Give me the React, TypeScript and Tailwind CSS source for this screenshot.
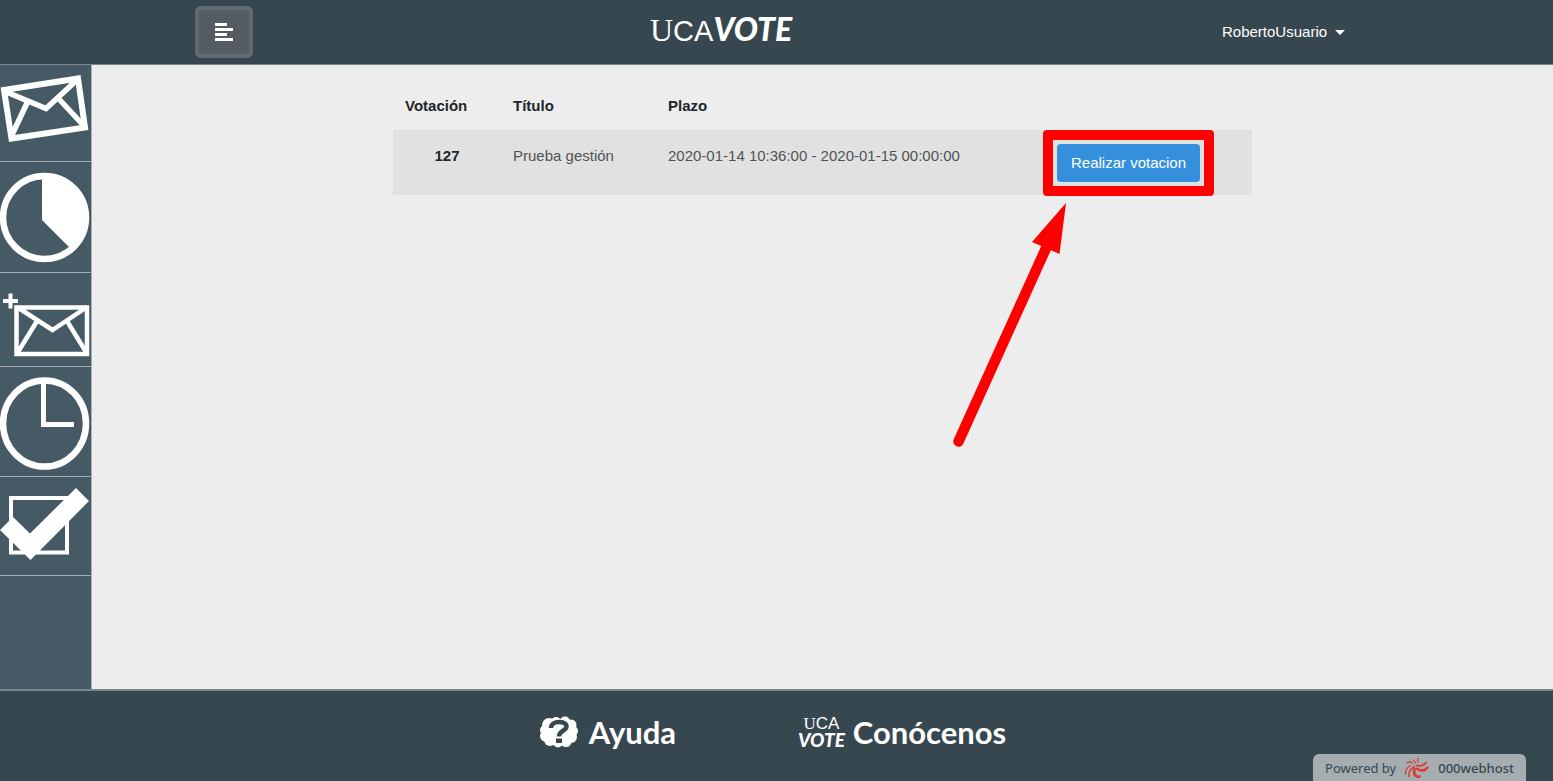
import React from "react";

function MailTilted() {
  return (
    <svg viewBox="0 0 91 96" className="block h-[96px] w-full" fill="none" stroke="#fff" strokeWidth="6">
      <path d="M4 25 78 13.500 85 62.500 11.500 73.500Z" />
      <path d="M4 26 46 43.500 78 14M28 36 11 72M58 33 85 62" strokeWidth="5.500" />
    </svg>
  );
}

function PieIcon() {
  return (
    <svg viewBox="0 0 91 110" className="block h-[110px] w-full">
      <circle cx="44.500" cy="55.500" r="41.500" fill="none" stroke="#fff" strokeWidth="6.500" />
      <path d="M42 12V58L68.500 84.500L76 86A44 44 0 0 0 42 12Z" fill="#fff" />
    </svg>
  );
}

function MailPlus() {
  return (
    <svg viewBox="0 0 91 93" className="block h-[93px] w-full" fill="none" stroke="#fff">
      <path d="M3 28H18M10.500 20.500V35.500" strokeWidth="4" />
      <path d="M16.500 34.500H87V81H16.500Z" strokeWidth="4.500" />
      <path d="M17 34 52.500 57 87 34M37 48 18 79M67 48 86 79" strokeWidth="4.500" />
    </svg>
  );
}

function ClockIcon() {
  return (
    <svg viewBox="0 0 91 109" className="block h-[109px] w-full" fill="none" stroke="#fff">
      <ellipse cx="44.500" cy="56.500" rx="41.500" ry="43" strokeWidth="6.500" />
      <path d="M43.500 14V57.500H74" strokeWidth="5" />
    </svg>
  );
}

function CheckIcon() {
  return (
    <svg viewBox="0 0 91 98" className="block h-[98px] w-full">
      <path d="M11 21H67V75.500H11Z" fill="none" stroke="#fff" strokeWidth="4" />
      <path d="M0 53 13 40 30 56.500 76 11 89 24 30.500 83Z" fill="#fff" />
    </svg>
  );
}

const links = [
  { label: "Votaciones", icon: <MailTilted /> },
  { label: "Resultados", icon: <PieIcon /> },
  { label: "Nueva votación", icon: <MailPlus /> },
  { label: "Pendientes", icon: <ClockIcon /> },
  { label: "Realizadas", icon: <CheckIcon /> },
];

function HelpIcon() {
  return (
    <svg viewBox="0 0 40 32" className="h-[32px] w-[40px]">
      <g fill="#fff">
        <ellipse cx="20" cy="16" rx="16.500" ry="13.500" />
        <circle cx="10" cy="9" r="7" />
        <circle cx="17" cy="6" r="5" />
        <circle cx="26" cy="5.500" r="5" />
        <circle cx="32" cy="9" r="5.500" />
        <circle cx="34" cy="15" r="5" />
        <circle cx="32" cy="21" r="6" />
        <circle cx="27" cy="25.500" r="5.500" />
        <circle cx="19" cy="26.500" r="5" />
        <circle cx="11" cy="24" r="6" />
        <circle cx="6.500" cy="20" r="5.500" />
        <circle cx="5.500" cy="14" r="4.500" />
      </g>
      <path d="M12 12C12 4 27.500 4.500 27.500 10.500C27.500 15.500 20 14 20 20.500" fill="none" stroke="#37474f" strokeWidth="4.500" />
      <path d="M17 22.500H23V27H17Z" fill="#37474f" />
    </svg>
  );
}

function HostLogo() {
  return (
    <svg viewBox="0 0 26 22" className="h-[22px] w-[26px]" fill="none" stroke="#e0352b" strokeLinecap="round">
      <path d="M1.500 17C1.500 13 3 10 6.500 8.500" strokeWidth="1.200" />
      <path d="M5 19.500C4.500 14.500 6.500 11.500 10.500 9.500" strokeWidth="1.500" />
      <path d="M10.500 12C9 17 12 20.500 15.500 19.500" strokeWidth="2.600" />
      <path d="M13 11.500C16 14.500 21 14 23.500 10.500" strokeWidth="2.400" />
      <path d="M13 8.500C16 9.500 20 8.500 22 5.500" strokeWidth="1.800" />
      <path d="M3 5.500C5 4.500 7 5 8.500 6M9.500 3 11.500 6M14 1.500C13 3 13.500 4 14 5" strokeWidth="1.200" />
    </svg>
  );
}

function Header() {
  return (
    <header className="grid h-[65px] grid-cols-[455fr_572fr_331fr] items-center border-b border-[#78878c] bg-[#37474f] pl-[195px]">
      <div>
        <button
          type="button"
          aria-label="Menú"
          className="flex h-[52px] w-[58px] items-center justify-center rounded-md border-4 border-[#616a73] bg-[#545b62]"
        >
          <svg viewBox="0 0 18 18" className="h-[18px] w-[18px]" fill="#fff">
            <path d="M0 0H12V3H0ZM0 5H18V8H0ZM0 10H12V13H0ZM0 15H18V18H0Z" />
          </svg>
        </button>
      </div>
      <a href="#" className="flex items-baseline pb-1 leading-[40px] text-white">
        <span className="font-['Liberation_Serif',serif] text-[32px]">U</span>
        <span className="text-[29px]">CA</span>
        <span className="font-['Lato',sans-serif] text-[32px] font-black italic">VOTE</span>
      </a>
      <div>
        <button type="button" className="flex items-center gap-2 text-[15px] leading-6 text-white">
          RobertoUsuario
          <svg viewBox="0 0 10 5" className="h-[5px] w-[10px]" fill="#fff">
            <path d="M0 0H10L5 5Z" />
          </svg>
        </button>
      </div>
    </header>
  );
}

function VoteAction() {
  return (
    <div className="relative inline-block align-top">
      <button
        type="button"
        className="block h-[38px] w-[143px] rounded bg-[#3490dc] text-[15px] leading-6 whitespace-nowrap text-white"
      >
        Realizar votacion
      </button>
      <div className="pointer-events-none absolute -inset-x-[14px] -inset-y-[14px] rounded border-10 border-[#ff0000]" />
      <svg
        viewBox="0 0 120 250"
        className="pointer-events-none absolute top-[56px] -left-[107px] h-[250px] w-[120px] max-w-none"
      >
        <path d="M8.500 241.500 97 46" stroke="#f00" strokeWidth="10.500" strokeLinecap="round" />
        <path d="M116 3 82 42 109.500 54Z" fill="#f00" />
      </svg>
    </div>
  );
}

export default function App() {
  return (
    <div className="flex min-h-screen flex-col bg-[#ededed] font-['Liberation_Sans',Arial,sans-serif] text-[15px] leading-6 text-[#212529]">
      <Header />
      <div className="flex flex-1">
        <nav className="w-[92px] shrink-0 border-r border-[#a7b1b5] bg-[#455a64]">
          {links.map((l) => (
            <a key={l.label} href="#" aria-label={l.label} className="block border-b border-[#a2adb2]">
              {l.icon}
            </a>
          ))}
        </nav>
        <main className="flex flex-1 justify-center pt-4">
          <div className="w-[859px]">
            <table className="w-full table-fixed border-collapse text-left">
              <colgroup>
                <col className="w-[108px]" />
                <col className="w-[155px]" />
                <col className="w-[397px]" />
                <col />
              </colgroup>
              <thead>
                <tr className="border-t border-[#e4e6e8]">
                  <th className="p-3">Votación</th>
                  <th className="p-3">Título</th>
                  <th className="p-3">Plazo</th>
                  <th className="p-3" />
                </tr>
              </thead>
              <tbody>
                <tr className="border-t border-[#dee2e6] bg-[#e1e1e1] align-top">
                  <th className="px-3 py-[13px] text-center">127</th>
                  <td className="px-3 py-[13px] text-[#505356]">Prueba gestión</td>
                  <td className="px-3 py-[13px] text-[#505356]">2020-01-14 10:36:00 - 2020-01-15 00:00:00</td>
                  <td className="px-1 py-[13px]">
                    <VoteAction />
                  </td>
                </tr>
              </tbody>
            </table>
          </div>
        </main>
      </div>
      <footer className="relative flex h-[92px] justify-center gap-[122px] border-t-2 border-[#78878c] bg-[#37474f] pr-2 font-['Lato',sans-serif] text-[31px] leading-[40px] font-bold text-white">
        <a href="#" className="mt-[21px] flex h-[40px] items-center gap-[10px]">
          <HelpIcon />
          Ayuda
        </a>
        <a href="#" className="mt-[21px] flex h-[40px] items-center gap-2">
          <span className="flex flex-col items-center">
            <span className="font-['Liberation_Sans',sans-serif] text-[17px] leading-[16px] font-normal">
              <span className="font-['Liberation_Serif',serif]">U</span>CA
            </span>
            <span className="text-[19px] leading-[16px] font-black italic">VOTE</span>
          </span>
          Conócenos
        </a>
        <a
          href="#"
          className="absolute right-[27px] bottom-0 flex h-[27px] w-[213px] items-center justify-center gap-2 rounded-t-md bg-[#a5adb0] font-['Noto_Sans',sans-serif] text-[13px] leading-5 font-normal text-[#37474f]"
        >
          Powered by
          <HostLogo />
          <span className="font-medium">000webhost</span>
        </a>
      </footer>
    </div>
  );
}
